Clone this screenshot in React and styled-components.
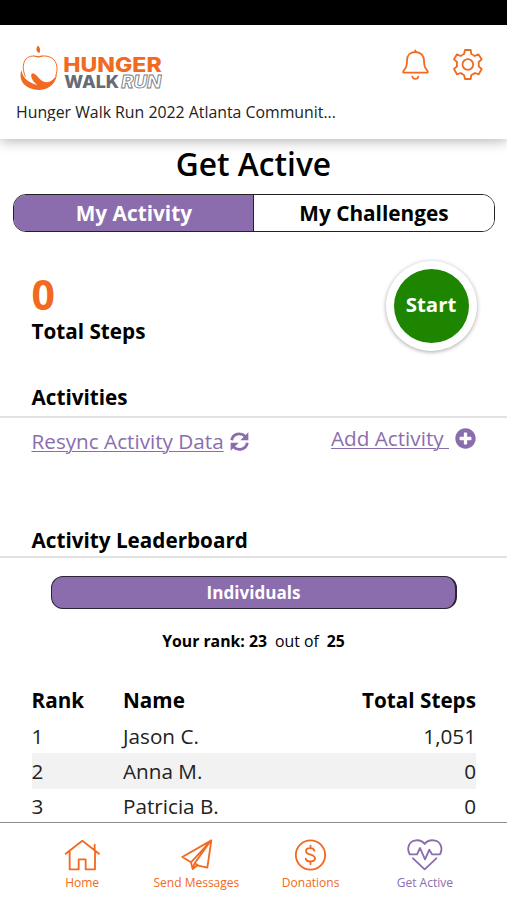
import React, { useState } from 'react';
import styled, { createGlobalStyle } from 'styled-components';
import { FaPlusCircle } from 'react-icons/fa';

const ORANGE = '#f26a21'
const PURPLE = '#8b6dae'

const LEADERS = [
    { rank: 1, name: 'Jason C.', steps: '1,051' },
    { rank: 2, name: 'Anna M.', steps: '0' },
    { rank: 3, name: 'Patricia B.', steps: '0' },
]

const Logo = () => (
    <svg width="146" height="48" viewBox="57 72 438 144">
        <path d="M113 77 C121 80 122 93 118 99 C108 96 107 85 113 77Z" fill={ORANGE} />
        <path
            d="M115 111 C98 104 82 110 75 121 C68 133 68 150 76 170 M115 111 C133 104 157 109 166 125 C174 141 171 157 167 168 M104 109 Q115 113 128 108"
            fill="none" stroke={ORANGE} strokeWidth="3"
        />
        <path d="M65 149 C65 169 82 187 112 195 C95 183 88 163 98 160 C114 163 118 186 139 187 C152 187 162 179 171 163 C168 190 146 210 119 210 C80 210 51 184 65 149Z" fill={ORANGE} />
        <LogoText x="190" y="155" fontSize="60" textLength="295" lengthAdjust="spacingAndGlyphs" fill={ORANGE}>HUNGER</LogoText>
        <LogoText x="193" y="204" fontSize="51" textLength="164" lengthAdjust="spacingAndGlyphs" fill="#666b75">WALK</LogoText>
        <LogoText x="364" y="203" fontSize="50" textLength="120" lengthAdjust="spacingAndGlyphs" fill="#fff" stroke="#777b84" strokeWidth="2.5" fontStyle="italic">RUN</LogoText>
    </svg>
)

const BellIcon = () => (
    <svg width="30" height="34" viewBox="60 54 90 102" fill="none" stroke={ORANGE} strokeWidth="5.5" strokeLinejoin="round" strokeLinecap="round">
        <path d="M106 61 V65 M106 66 C90 66 81 77 81 91 C81 109 78 114 70 123 V128 H143 V123 C135 114 132 109 132 91 C132 77 122 66 106 66Z" />
        <path d="M97 140 C99 149 113 149 115 140" />
    </svg>
)

const GearIcon = () => (
    <svg width="32" height="34" viewBox="215 54 96 102" fill="none" stroke={ORANGE} strokeWidth="5.5" strokeLinejoin="round">
        <path d="M254 60 H271 L273 72 Q278 74 283 78 L294 73 L304 88 L295 96 Q296 103 295 109 L304 117 L295 133 L284 129 Q279 133 273 135 L271 147 H254 L251 135 Q246 133 241 129 L230 133 L221 117 L230 109 Q229 103 230 96 L221 88 L230 73 L241 78 Q246 74 251 72Z" />
        <circle cx="262.5" cy="103.5" r="16" />
    </svg>
)

const SyncIcon = () => (
    <svg width="19" height="19" viewBox="690 187 57 57">
        <path d="M695 212 C698 192 722 186 737 201 M742 219 C738 240 714 245 700 231" fill="none" stroke={PURPLE} strokeWidth="8.5" />
        <path d="M745 188 V212 H721Z M692 243 V219 H716Z" fill={PURPLE} />
    </svg>
)

const HomeIcon = () => (
    <NavSvg viewBox="192 84 111 102">
        <path d="M197 131 L247 92 L297 131 M209 123 V178 H236 V148 H257 V178 H285 V123 M284 120 V104" />
    </NavSvg>
)

const SendIcon = () => (
    <NavSvg viewBox="534 84 111 102">
        <path d="M634 91 L547 141 L573 157 L578 177 L592 166 L622 173Z M634 91 L573 157 M628 98 L584 160 L578 177 M584 160 L594 166" />
    </NavSvg>
)

const DollarIcon = () => (
    <NavSvg viewBox="127 84 111 102">
        <circle cx="182.500" cy="135" r="44" />
        <path d="M194 122 C191 111 169 112 169 123 C169 137 196 131 196 145 C196 157 171 158 168 146 M182.500 107 V114 M182.500 155 V163" />
    </NavSvg>
)

const HeartIcon = () => (
    <NavSvg viewBox="469 84 111 102">
        <path d="M480 133 C471 117 476 93 499 91 C511 90 519 94 525 102 C531 94 541 90 552 91 C575 93 580 117 571 133 H547 L539 119 L526 148 L511 114 L502 133 H480 M490 145 L525 178 L560 145" />
    </NavSvg>
)

const NAV_ITEMS = [
    { label: 'Home', Icon: HomeIcon },
    { label: 'Send Messages', Icon: SendIcon },
    { label: 'Donations', Icon: DollarIcon },
    { label: 'Get Active', Icon: HeartIcon },
]

const App = () => {
    const [tab, setTab] = useState('activity')
    const [page, setPage] = useState('Get Active')

    return (
        <Screen>
            <GlobalStyle />
            <StatusBar />
            <Header>
                <HeaderTop>
                    <Logo />
                    <HeaderIcons>
                        <BellIcon />
                        <GearIcon />
                    </HeaderIcons>
                </HeaderTop>
                <EventName>Hunger Walk Run 2022 Atlanta Communit...</EventName>
            </Header>
            <Main>
                <Title>Get Active</Title>
                <Tabs>
                    <Tab $active={tab === 'activity'} onClick={() => setTab('activity')}>My Activity</Tab>
                    <Tab $active={tab === 'challenges'} onClick={() => setTab('challenges')}>My Challenges</Tab>
                </Tabs>
                <Stats>
                    <div>
                        <StepCount>0</StepCount>
                        <StepLabel>Total Steps</StepLabel>
                    </div>
                    <StartButton>Start</StartButton>
                </Stats>
                <SectionTitle $line={31}>Activities</SectionTitle>
                <Actions>
                    <Action $top={9}><u>Resync Activity Data</u><SyncIcon /></Action>
                    <Action $top={6}><u>Add Activity&nbsp;</u><FaPlusCircle size={21} /></Action>
                </Actions>
                <SectionTitle $line={37}>Activity Leaderboard</SectionTitle>
                <Individuals>Individuals</Individuals>
                <RankLine><b>Your rank: 23</b><span>out of</span><b>25</b></RankLine>
                <Table>
                    <HeadRow><span>Rank</span><span>Name</span><span>Total Steps</span></HeadRow>
                    {LEADERS.map(l => (
                        <Row key={l.rank}><span>{l.rank}</span><span>{l.name}</span><span>{l.steps}</span></Row>
                    ))}
                </Table>
            </Main>
            <Nav>
                {NAV_ITEMS.map(({ label, Icon }) => (
                    <NavItem key={label} $active={page === label} onClick={() => setPage(label)}>
                        <Icon />
                        {label}
                    </NavItem>
                ))}
            </Nav>
        </Screen>
    );
};

const GlobalStyle = createGlobalStyle`
    * {
        box-sizing: border-box;
    }
    body {
        margin: 0;
        background: #fff;
        color: #000;
        font-family: 'Open Sans', sans-serif;
    }
    button {
        font-family: inherit;
        padding: 0;
        cursor: pointer;
    }
`

const Screen = styled.div`
    display: flex;
    flex-direction: column;
    height: 900px;
    overflow: hidden;
`

const StatusBar = styled.div`
    flex: none;
    height: 25px;
    background: #000;
`

const Header = styled.header`
    position: relative;
    flex: none;
    height: 114px;
    padding: 19px 23px 0 16px;
    background: #fff;
    box-shadow: 0 2px 12px rgba(0, 0, 0, 0.3);
`

const HeaderTop = styled.div`
    display: flex;
    justify-content: space-between;
    padding-left: 3px;
`

const HeaderIcons = styled.div`
    display: flex;
    gap: 22px;
    padding-top: 4px;
`

const LogoText = styled.text`
    font-family: Inter, sans-serif;
    font-weight: 800;
`

const EventName = styled.div`
    height: 19px;
    margin-top: 10px;
    overflow: hidden;
    font-size: 15.85px;
    line-height: 21px;
    white-space: nowrap;
    color: #222;
`

const Main = styled.main`
    flex: 1;
    min-height: 0;
    overflow: hidden;
`

const Title = styled.h1`
    height: 55px;
    margin: 0;
    font-size: 31.7px;
    font-weight: 600;
    line-height: 49px;
    text-align: center;
`

const Tabs = styled.div`
    display: flex;
    height: 38px;
    margin: 0 12.5px 0 13.4px;
    border: 1px solid #222;
    border-radius: 13px;
    overflow: hidden;
`

const Tab = styled.button`
    flex: 1;
    border: 0;
    background: ${props => props.$active ? PURPLE : '#fff'};
    color: ${props => props.$active ? '#fff' : '#000'};
    font-size: 20.8px;
    font-weight: 700;

    & + & {
        border-left: 1px solid #222;
    }
`

const Stats = styled.section`
    display: flex;
    justify-content: space-between;
    height: 150px;
    padding: 29px 30.5px 0 31.5px;
`

const StepCount = styled.div`
    margin-top: 6px;
    color: ${ORANGE};
    font-size: 41px;
    font-weight: 700;
    line-height: 54px;
`

const StepLabel = styled.div`
    font-size: 20.7px;
    font-weight: 700;
    line-height: 20px;
`

const StartButton = styled.button`
    width: 91px;
    height: 90px;
    padding-bottom: 4px;
    border: 8px solid #fff;
    border-radius: 50%;
    background: #1e8500;
    box-shadow: 0 1px 4px rgba(0, 0, 0, 0.35);
    color: #fff;
    font-size: 20.4px;
    font-weight: 700;
`

const SectionTitle = styled.h2`
    height: 36px;
    margin: 0;
    padding-left: 31.5px;
    border-bottom: 2px solid #e2e2e2;
    font-size: 20.7px;
    font-weight: 700;
    line-height: ${props => props.$line}px;
`

const Actions = styled.div`
    display: flex;
    justify-content: space-between;
    height: 104px;
    padding: 0 31px 0 31.5px;
`

const Action = styled.a`
    display: flex;
    align-items: center;
    gap: 6px;
    height: 29px;
    margin-top: ${props => props.$top}px;
    color: ${PURPLE};
    font-size: 20.7px;
    line-height: 29px;
    cursor: pointer;

    u {
        text-decoration-thickness: 1px;
        text-underline-offset: 2px;
    }
`

const Individuals = styled.button`
    display: block;
    width: 406px;
    height: 33px;
    margin: 18px 0 0 51px;
    border: 1px solid #2c2435;
    border-right-width: 2px;
    border-radius: 12px;
    background: ${PURPLE};
    color: #fff;
    font-size: 17.1px;
    font-weight: 700;
`

const RankLine = styled.div`
    display: flex;
    justify-content: center;
    gap: 8px;
    margin-top: 20px;
    font-size: 15.8px;
    line-height: 24px;
`

const Table = styled.div`
    margin: 29.5px 31px 0 31.5px;
    font-size: 20.7px;
`

const Row = styled.div`
    display: grid;
    grid-template-columns: 91.5px 1fr auto;
    align-items: center;
    height: 35.4px;
    color: #222;

    &:nth-child(odd) {
        background: #f2f2f2;
    }
`

const HeadRow = styled(Row)`
    color: #000;
    font-weight: 700;

    &:nth-child(odd) {
        background: none;
    }
`

const Nav = styled.nav`
    display: flex;
    flex: none;
    height: 78px;
    padding: 15px 25px 0;
    border-top: 1px solid #8c8c8c;
    background: #fff;
`

const NavSvg = styled.svg`
    width: 37px;
    height: 34px;
    fill: none;
    stroke: currentColor;
    stroke-width: 5.5;
    stroke-linejoin: round;
    stroke-linecap: round;
`

const NavItem = styled.button`
    display: flex;
    flex: 1;
    flex-direction: column;
    align-items: center;
    gap: 3px;
    border: 0;
    background: none;
    color: ${props => props.$active ? PURPLE : ORANGE};
    font-size: 12px;
    line-height: 16px;
    white-space: nowrap;
`

export default App;
